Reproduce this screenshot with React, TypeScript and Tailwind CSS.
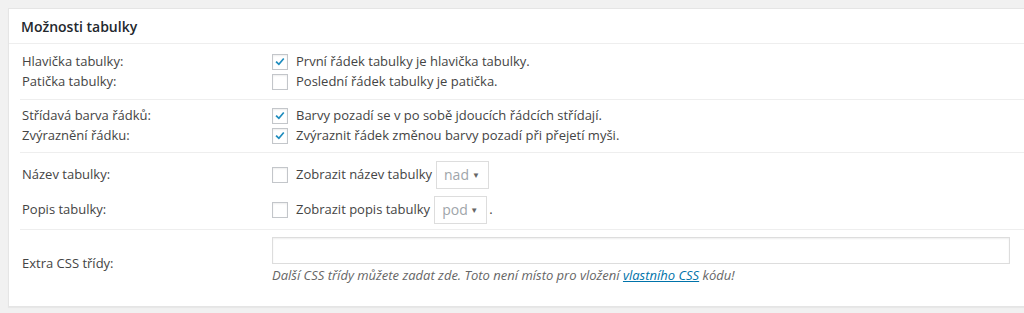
import React from 'react';

function Check({ on }: { on?: boolean }) {
  return (
    <span className="relative inline-flex h-[16px] w-[16px] shrink-0 items-center justify-center border border-[#c3c6ca] bg-white shadow-[inset_0_1px_2px_rgba(0,0,0,0.07)]">
      {on && (
        <svg viewBox="0 0 20 20" className="h-[16px] w-[16px]">
          <path d="M5.2 10.2l3.2 3.2 6.2-7.4" fill="none" stroke="#1e8cbe" strokeWidth="2.4" strokeLinecap="square" />
        </svg>
      )}
    </span>
  );
}

function Select({ value }: { value: string }) {
  return (
    <span className="ml-[4px] inline-flex h-[28px] w-[53px] items-center justify-between border border-[#dddddd] bg-white pl-[7px] pr-[8px] text-[14px] text-[#a0a5aa]">
      <span>{value}</span>
      <span className="text-[8px] text-[#666]">▼</span>
    </span>
  );
}

export default function App() {
  return (
    <div className="h-[313px] w-[1024px] overflow-hidden bg-[#f1f1f1] pt-2 pl-2 font-['Open_Sans',sans-serif] text-[13px] text-[#444]">
      <div className="w-[1030px] border border-[#e5e5e5] bg-white shadow-[0_1px_1px_rgba(0,0,0,0.04)]">
        <div className="flex h-[35px] items-center border-b border-[#eeeeee] px-[12px] text-[14px] font-semibold text-[#23282d]">
          Možnosti tabulky
        </div>
        <div className="mx-[11px] pb-[20px] pt-[1px]">
          <div className="border-b border-[#eeeeee] py-[7px]">
            <div className="flex h-[20px] items-center">
              <span className="w-[252px] pl-[2px]">Hlavička tabulky:</span>
              <Check on />
              <span className="ml-[8px]">První řádek tabulky je hlavička tabulky.</span>
            </div>
            <div className="flex h-[20px] items-center">
              <span className="w-[252px] pl-[2px]">Patička tabulky:</span>
              <Check />
              <span className="ml-[8px]">Poslední řádek tabulky je patička.</span>
            </div>
          </div>
          <div className="border-b border-[#eeeeee] py-[6px]">
            <div className="flex h-[20px] items-center">
              <span className="w-[252px] pl-[2px]">Střídavá barva řádků:</span>
              <Check on />
              <span className="ml-[8px]">Barvy pozadí se v po sobě jdoucích řádcích střídají.</span>
            </div>
            <div className="flex h-[20px] items-center">
              <span className="w-[252px] pl-[2px]">Zvýraznění řádku:</span>
              <Check on />
              <span className="ml-[8px]">Zvýraznit řádek změnou barvy pozadí při přejetí myši.</span>
            </div>
          </div>
          <div className="border-b border-[#eeeeee] pb-[5px] pt-[7px]">
            <div className="flex h-[29px] items-center">
              <span className="w-[252px] pl-[2px]">Název tabulky:</span>
              <Check />
              <span className="ml-[8px]">Zobrazit název tabulky</span>
              <Select value="nad" />
            </div>
            <div className="mt-[6px] flex h-[29px] items-center">
              <span className="w-[252px] pl-[2px]">Popis tabulky:</span>
              <Check />
              <span className="ml-[8px]">Zobrazit popis tabulky</span>
              <Select value="pod" />
              <span className="ml-[2px]">.</span>
            </div>
          </div>
          <div className="flex items-center pt-[7px]">
            <span className="w-[252px] pl-[2px] pt-[4px]">Extra CSS třídy:</span>
            <div className="flex flex-col">
              <div className="h-[27px] w-[738px] border border-[#dddddd] bg-white shadow-[inset_0_1px_2px_rgba(0,0,0,0.07)]" />
              <p className="mt-[2px] italic text-[#666]">
                Další CSS třídy můžete zadat zde. Toto není místo pro vložení{' '}
                <span className="text-[#0073aa] underline">vlastního CSS</span> kódu!
              </p>
            </div>
          </div>
        </div>
      </div>
    </div>
  );
}
